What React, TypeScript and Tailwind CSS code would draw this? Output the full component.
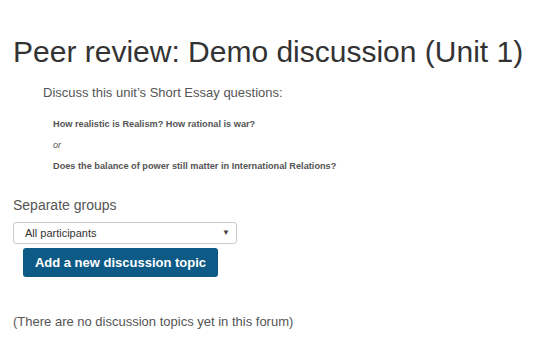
export default function App() {
  return (
    <div className="min-h-[349px] bg-white px-[13px] pt-[35px] text-[#555] [font-family:'Liberation_Sans',Arial,sans-serif]">
      <h1 className="text-[30px] leading-[34px] whitespace-nowrap text-[#333]">Peer review: Demo discussion (Unit 1)</h1>

      <div className="mt-[16px] pl-[30px] text-[13px] leading-[16px]">Discuss this unit’s Short Essay questions:</div>

      <div className="mt-[17px] pl-[40px] text-[9.2px] leading-[12px]">
        <p className="font-bold">How realistic is Realism? How rational is war?</p>
        <p className="mt-[9px] italic">or</p>
        <p className="mt-[9px] font-bold">Does the balance of power still matter in International Relations?</p>
      </div>

      <div className="mt-[25px] text-[14px] leading-[17px]">Separate groups</div>

      <div className="mt-[8px] flex h-[22px] w-[224px] items-center justify-between rounded-[3px] border border-[#ccc] bg-white pl-[11px] pr-[6px] text-[11px] text-[#333]">
        <span>All participants</span>
        <span className="text-[8px] text-[#444]">▼</span>
      </div>

      <button className="ml-[10px] mt-[4px] h-[29px] w-[195px] rounded-[3px] bg-[#0d5a86] text-[13px] font-bold text-white">
        Add a new discussion topic
      </button>

      <div className="mt-[37px] text-[13px] leading-[16px]">(There are no discussion topics yet in this forum)</div>
    </div>
  );
}
